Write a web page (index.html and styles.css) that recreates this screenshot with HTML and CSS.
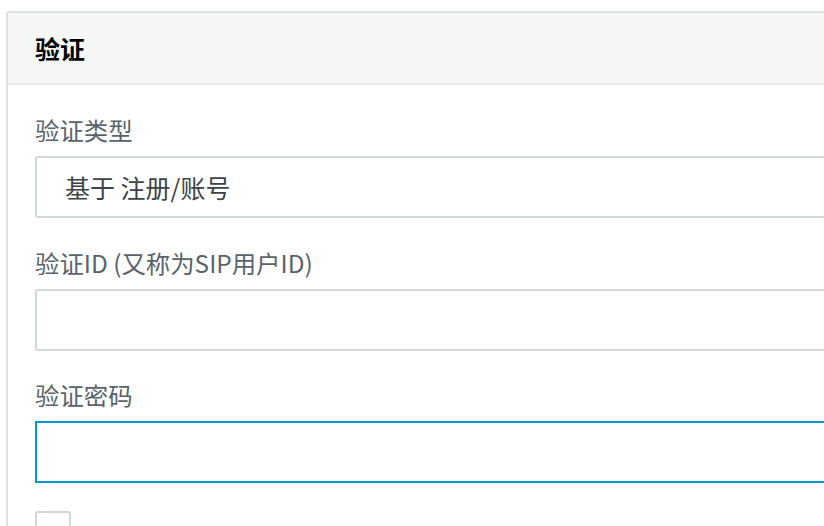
FILE: index.html
```html
<!DOCTYPE html>
<html lang="zh">
<head>
<meta charset="utf-8">
<link rel="stylesheet" href="styles.css">
</head>
<body>
<section class="panel">
  <header class="panel-head">验证</header>
  <div class="panel-body">
    <div class="field">
      <label class="field-label">验证类型</label>
      <div class="select">基于 注册/账号</div>
    </div>
    <div class="field">
      <label class="field-label">验证ID (又称为SIP用户ID)</label>
      <div class="input"></div>
    </div>
    <div class="field">
      <label class="field-label">验证密码</label>
      <div class="input focused"></div>
    </div>
    <div class="check-row">
      <span class="checkbox"></span>
    </div>
  </div>
</section>
</body>
</html>
```

FILE: styles.css
```css
html, body {
  margin: 0;
  padding: 0;
  background: #ffffff;
  overflow: hidden;
}
body {
  font-family: "Noto Sans CJK SC", "Noto Sans", sans-serif;
  width: 824px;
  height: 526px;
}
.panel {
  margin: 11px 0 0 6px;
  width: 960px;
  border: 2px solid #dde3e3;
  border-radius: 3px;
  background: #ffffff;
}
.panel-head {
  height: 70px;
  background: #f5f7f7;
  border-bottom: 2px solid #e8eced;
  padding-left: 27px;
  display: flex;
  align-items: center;
  font-size: 25px;
  font-weight: 700;
  color: #000000;
}
.panel-body {
  padding: 29px 0 0 27px;
}
.field {
  display: flex;
  flex-direction: column;
  margin-bottom: 28.5px;
}
.field-label {
  font-size: 24.4px;
  line-height: 32px;
  color: #59646a;
  margin-bottom: 10px;
}
.select, .input {
  box-sizing: border-box;
  height: 62px;
  border: 2px solid #d0d9da;
  border-radius: 3px;
  background: #ffffff;
}
.select {
  display: flex;
  align-items: center;
  padding-left: 28px;
  font-size: 25px;
  color: #3d4447;
}
.input.focused {
  border-color: #0097d3;
  border-radius: 0;
}
.check-row {
  margin-top: -1px;
}
.checkbox {
  display: block;
  box-sizing: border-box;
  width: 36px;
  height: 36px;
  border: 2px solid #d0d9da;
  border-radius: 3px;
}
```
